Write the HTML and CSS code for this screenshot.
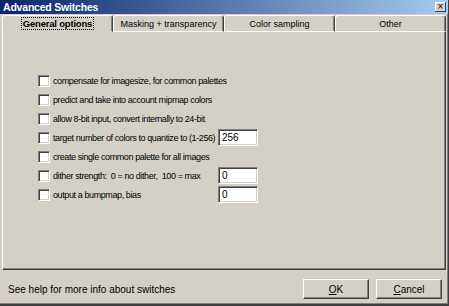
FILE: index.html
```html
<!DOCTYPE html>
<html lang="en">
<head>
  <meta charset="UTF-8" />
  <title>Advanced Switches</title>
  <link rel="stylesheet" href="styles.css">
</head>
<body>
  <div class="window">
    <div class="titlebar">
      <span class="title">Advanced Switches</span>
      <span class="close">&#215;</span>
    </div>

    <div class="tabs">
      <div class="tab active"><span class="focus">General options</span></div>
      <div class="tab">Masking + transparency</div>
      <div class="tab">Color sampling</div>
      <div class="tab">Other</div>
    </div>

    <div class="panel">
      <div class="options">
        <div class="row"><span class="check"></span><span class="label">compensate for imagesize, for common palettes</span></div>
        <div class="row"><span class="check"></span><span class="label">predict and take into account mipmap colors</span></div>
        <div class="row"><span class="check"></span><span class="label">allow 8-bit input, convert internally to 24-bit</span></div>
        <div class="row"><span class="check"></span><span class="label fixed">target number of colors to quantize to (1-256)</span><span class="field">256</span></div>
        <div class="row"><span class="check"></span><span class="label">create single common palette for all images</span></div>
        <div class="row"><span class="check"></span><span class="label fixed">dither strength:&nbsp; 0 = no dither,&nbsp; 100 = max</span><span class="field">0</span></div>
        <div class="row"><span class="check"></span><span class="label fixed">output a bumpmap, bias</span><span class="field">0</span></div>
      </div>
    </div>

    <div class="footer">
      <span class="hint">See help for more info about switches</span>
      <div class="buttons">
        <button class="btn"><u>O</u>K</button>
        <button class="btn"><u>C</u>ancel</button>
      </div>
    </div>
  </div>
</body>
</html>
```

FILE: styles.css
```css
* {
  margin: 0; padding: 0; box-sizing: border-box;
}

html, body {
  width: 449px;
  height: 306px;
  overflow: hidden;
  background: #d4d0c8;
  font-family: "Liberation Sans", Arial, sans-serif;
  font-size: 11px;
  color: #000;
}

.window {
  width: 449px;
  height: 306px;
  display: flex;
  flex-direction: column;
  border-right: 1px solid #404040;
  border-bottom: 2px solid #404040;
  box-shadow: inset -1px -1px 0 #808080;
}

/* title bar */
.titlebar {
  height: 14px;
  display: flex;
  align-items: center;
  justify-content: space-between;
  padding: 0 2px 0 3px;
  background: linear-gradient(to right, #0a246a, #a6caf0);
}

.title {
  color: #fff;
  font-weight: bold;
  font-size: 10.5px;
  letter-spacing: -0.2px;
}

.close {
  width: 11px;
  height: 10px;
  background: #d4d0c8;
  box-shadow: inset -1px -1px 0 #404040, inset 1px 1px 0 #fff;
  font-size: 10px;
  line-height: 9px;
  text-align: center;
  color: #000;
}

/* tabs */
.tabs {
  height: 17px;
  margin-top: 1px;
  display: flex;
  padding: 0 2px;
  font-size: 9px;
}

.tab {
  flex: 1;
  display: flex;
  align-items: center;
  justify-content: center;
  white-space: nowrap;
  border-top: 1px solid #fff;
  border-left: 1px solid #fff;
  border-right: 1px solid #404040;
  border-bottom: 1px solid #fff;
  border-radius: 3px 3px 0 0;
  box-shadow: inset -1px 0 0 #808080;
}

.tab.active {
  border-bottom-color: #d4d0c8;
  font-weight: bold;
  font-size: 9.5px;
  letter-spacing: -0.2px;
}

.focus {
  outline: 1px dotted #000;
  padding: 0 1px;
}

/* panel */
.panel {
  height: 238px;
  margin: 0 2px;
  border-left: 1px solid #fff;
  border-right: 1px solid #404040;
  border-bottom: 1px solid #404040;
  box-shadow: inset -1px -1px 0 #808080;
  padding: 39px 0 0 35px;
}

.options {
  display: flex;
  flex-direction: column;
  font-size: 9px;
  letter-spacing: -0.4px;
}

.row {
  height: 19px;
  display: flex;
  align-items: center;
  white-space: nowrap;
}

.check {
  width: 12px;
  height: 12px;
  background: #fff;
  border-top: 1px solid #808080;
  border-left: 1px solid #808080;
  border-right: 1px solid #fff;
  border-bottom: 1px solid #fff;
  box-shadow: inset 1px 1px 0 #404040, inset -1px -1px 0 #d4d0c8;
}

.label {
  margin-left: 3px;
}

.label.fixed {
  width: 165px;
}

.field {
  width: 40px;
  height: 17px;
  padding: 2px 3px;
  background: #fff;
  border-top: 1px solid #808080;
  border-left: 1px solid #808080;
  border-right: 1px solid #fff;
  border-bottom: 1px solid #fff;
  box-shadow: inset 1px 1px 0 #404040, inset -1px -1px 0 #d4d0c8;
  line-height: 12px;
  font-size: 10px;
  letter-spacing: 0;
}

/* footer */
.footer {
  flex: 1;
  display: flex;
  justify-content: space-between;
  padding: 9px 6px 0 8px;
}

.hint {
  margin-top: 5px;
  font-size: 10px;
}

.buttons {
  display: flex;
  gap: 7px;
}

.btn {
  width: 66px;
  height: 20px;
  background: #d4d0c8;
  font-family: "Liberation Sans", Arial, sans-serif;
  font-size: 10px;
  color: #000;
  border-top: 1px solid #fff;
  border-left: 1px solid #fff;
  border-right: 1px solid #404040;
  border-bottom: 1px solid #404040;
  box-shadow: inset -1px -1px 0 #808080;
}
```
